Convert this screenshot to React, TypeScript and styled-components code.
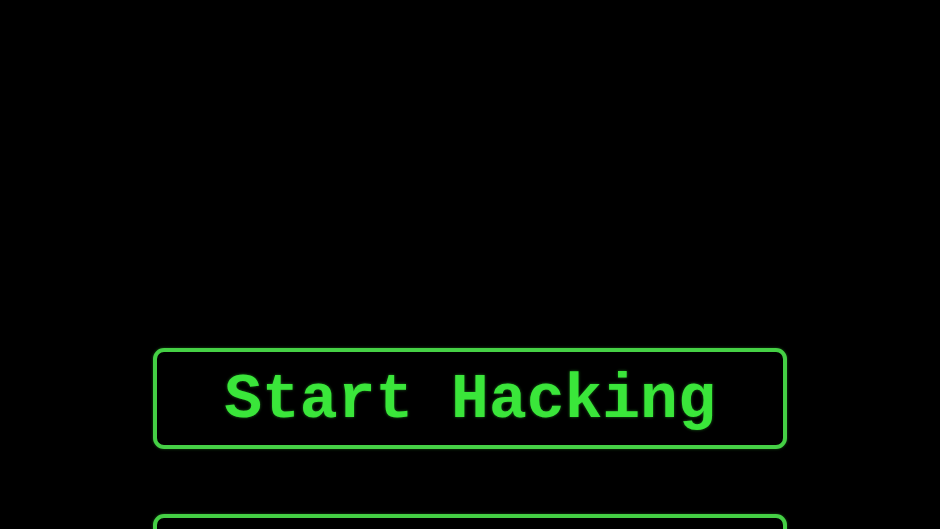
import styled, { createGlobalStyle } from "styled-components";

const GlobalStyle = createGlobalStyle`
  html, body {
    margin: 0;
    padding: 0;
    background: #000;
    height: 100%;
    overflow: hidden;
  }
`;

const Screen = styled.div`
  width: 940px;
  height: 529px;
  background: #000;
  display: flex;
  flex-direction: column;
  align-items: center;
  padding-top: 348px;
  box-sizing: border-box;
  gap: 65px;
  overflow: hidden;
`;

const MenuButton = styled.button`
  width: 634px;
  height: 101px;
  flex-shrink: 0;
  box-sizing: border-box;
  background: #000;
  border: 4px solid #45d045;
  border-radius: 11px;
  color: #3ae63a;
  font-family: "Liberation Mono", "Courier New", monospace;
  font-weight: 700;
  font-size: 63px;
  display: flex;
  align-items: center;
  justify-content: center;
  padding: 3px 0 0 0;
  text-shadow: 0 0 3px rgba(60, 230, 60, 0.5);
  box-shadow: 0 0 3px rgba(60, 210, 60, 0.4);
  cursor: pointer;
`;

export default function App() {
  return (
    <>
      <GlobalStyle />
      <Screen>
        <MenuButton>Start Hacking</MenuButton>
        <MenuButton aria-label="next option" />
      </Screen>
    </>
  );
}
